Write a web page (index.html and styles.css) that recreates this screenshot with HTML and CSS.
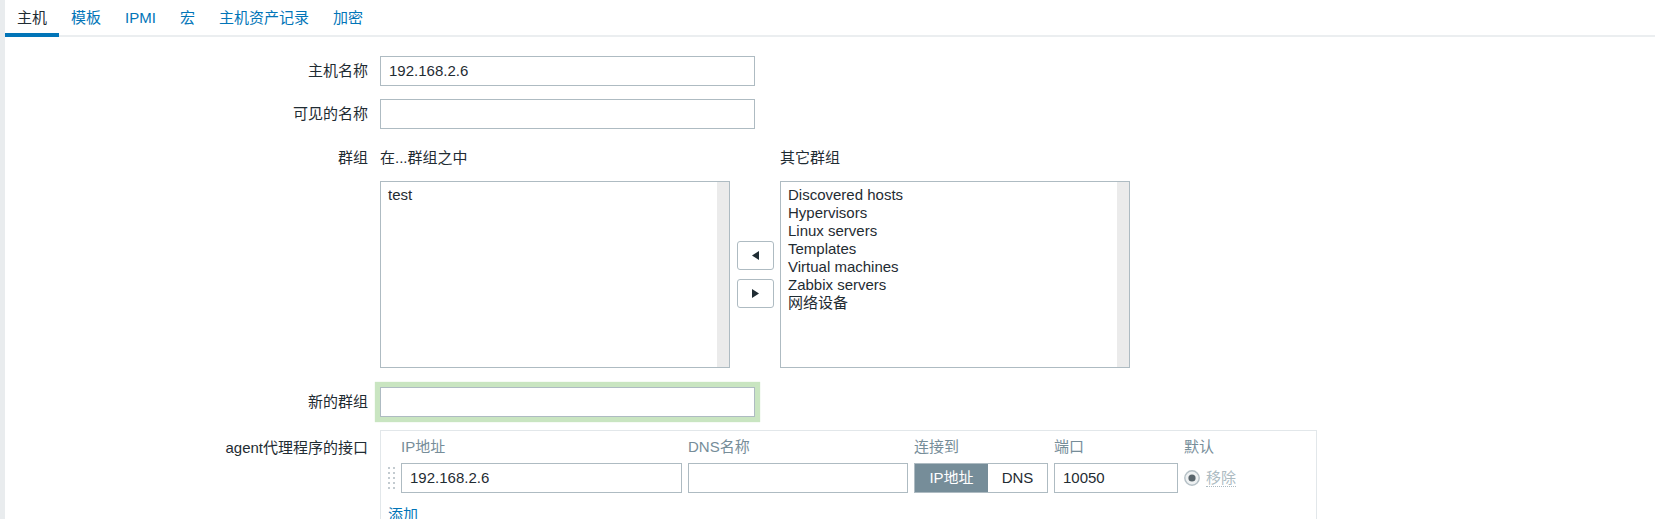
FILE: index.html
```html
<!DOCTYPE html>
<html lang="zh-CN">
<head>
<meta charset="utf-8">
<title>主机</title>
<link rel="stylesheet" href="styles.css">
</head>
<body>
<div class="page">
  <nav class="tabs">
    <a class="tab active">主机</a>
    <a class="tab">模板</a>
    <a class="tab">IPMI</a>
    <a class="tab">宏</a>
    <a class="tab">主机资产记录</a>
    <a class="tab">加密</a>
  </nav>

  <div class="form">
    <div class="row row-host">
      <div class="lbl">主机名称</div>
      <div class="field"><div class="input wide">192.168.2.6</div></div>
    </div>

    <div class="row row-visible">
      <div class="lbl">可见的名称</div>
      <div class="field"><div class="input wide"></div></div>
    </div>

    <div class="row row-groups">
      <div class="lbl lbl-top">群组</div>
      <div class="groups">
        <div class="ghead">在...群组之中</div>
        <div></div>
        <div class="ghead">其它群组</div>
        <div class="listbox">
          <div class="items">
            <div>test</div>
          </div>
          <div class="track"></div>
        </div>
        <div class="movers">
          <button class="mv" type="button"><svg width="7" height="9" viewBox="0 0 7 9"><polygon points="7,0 7,9 0,4.5" fill="#1f2c33"/></svg></button>
          <button class="mv" type="button"><svg width="7" height="9" viewBox="0 0 7 9"><polygon points="0,0 0,9 7,4.5" fill="#1f2c33"/></svg></button>
        </div>
        <div class="listbox">
          <div class="items">
            <div>Discovered hosts</div>
            <div>Hypervisors</div>
            <div>Linux servers</div>
            <div>Templates</div>
            <div>Virtual machines</div>
            <div>Zabbix servers</div>
            <div>网络设备</div>
          </div>
          <div class="track"></div>
        </div>
      </div>
    </div>

    <div class="row row-new">
      <div class="lbl">新的群组</div>
      <div class="field"><div class="input wide glow"></div></div>
    </div>

    <div class="row row-iface">
      <div class="lbl lbl-top lbl-iface">agent代理程序的接口</div>
      <div class="iface">
        <div class="igrid">
          <div></div>
          <div class="ih">IP地址</div>
          <div class="ih">DNS名称</div>
          <div class="ih">连接到</div>
          <div class="ih">端口</div>
          <div class="ih">默认</div>

          <div class="handle">
            <svg width="7" height="22" viewBox="0 0 7 22">
              <g fill="#c3cbd0">
                <rect x="0" y="0" width="2" height="2"/><rect x="5" y="0" width="2" height="2"/>
                <rect x="0" y="5" width="2" height="2"/><rect x="5" y="5" width="2" height="2"/>
                <rect x="0" y="10" width="2" height="2"/><rect x="5" y="10" width="2" height="2"/>
                <rect x="0" y="15" width="2" height="2"/><rect x="5" y="15" width="2" height="2"/>
                <rect x="0" y="20" width="2" height="2"/><rect x="5" y="20" width="2" height="2"/>
              </g>
            </svg>
          </div>
          <div class="input">192.168.2.6</div>
          <div class="input"></div>
          <div class="seg">
            <span class="seg-on">IP地址</span>
            <span class="seg-off">DNS</span>
          </div>
          <div class="input">10050</div>
          <div class="dflt">
            <svg width="16" height="16" viewBox="0 0 16 16">
              <circle cx="8" cy="8" r="7.2" fill="#eef1f2" stroke="#b5c0c6" stroke-width="1.4"/>
              <circle cx="8" cy="8" r="3.6" fill="#59656c"/>
            </svg>
            <span class="remove">移除</span>
          </div>
        </div>
        <a class="add">添加</a>
      </div>
    </div>
  </div>
</div>
</body>
</html>
```

FILE: styles.css
```css
* {
  box-sizing: border-box;
}

html, body {
  margin: 0;
  padding: 0;
  background: #ffffff;
}

body {
  font-family: "Liberation Sans", "Noto Sans CJK SC", sans-serif;
  font-size: 15px;
  color: #1f2c33;
  width: 1655px;
  height: 519px;
  overflow: hidden;
}

.page {
  border-left: 5px solid #e9ecee;
  min-height: 519px;
}

/* tabs */
.tabs {
  display: flex;
  border-bottom: 2px solid #ebeef0;
  height: 37px;
}

.tab {
  display: block;
  padding: 2px 12px 0 12px;
  line-height: 31px;
  height: 37px;
  margin-bottom: -2px;
  border-bottom: 4px solid transparent;
  color: #0275b8;
  text-decoration: none;
  cursor: pointer;
}

.tab.active {
  color: #1f2c33;
  border-bottom-color: #0275b8;
}

/* form rows */
.row {
  display: grid;
  grid-template-columns: 363px 1fr;
  column-gap: 12px;
  align-items: center;
}

.row-host { margin-top: 19px; }
.row-visible { margin-top: 13px; }
.row-groups { margin-top: 20px; align-items: start; }
.row-new { margin-top: 19px; }
.row-iface { margin-top: 13px; align-items: start; }

.lbl {
  text-align: right;
  line-height: 18px;
  white-space: nowrap;
}

.lbl-iface {
  padding-top: 9px;
}

.input {
  height: 30px;
  border: 1px solid #aebbc2;
  background: #ffffff;
  padding: 0 8px;
  line-height: 28px;
  color: #1f2c33;
  white-space: nowrap;
  overflow: hidden;
}

.input.wide {
  width: 375px;
}

.input.glow {
  box-shadow: 0 0 1px 5px #c9e5c1;
}

/* groups */
.groups {
  display: grid;
  grid-template-columns: 350px 50px 350px;
  grid-template-rows: 18px 187px;
  row-gap: 14px;
}

.ghead {
  line-height: 18px;
}

.listbox {
  display: flex;
  border: 1px solid #aebbc2;
  background: #ffffff;
  height: 187px;
}

.items {
  flex: 1;
  padding: 4px 7px;
  line-height: 18px;
}

.track {
  width: 12px;
  background: #ebebeb;
}

.movers {
  display: flex;
  flex-direction: column;
  align-items: center;
  justify-content: center;
  gap: 9px;
}

.mv {
  width: 37px;
  height: 29px;
  border: 1px solid #aebbc2;
  border-radius: 3px;
  background: #ffffff;
  padding: 0;
  display: flex;
  align-items: center;
  justify-content: center;
}

/* interface */
.iface {
  width: 937px;
  border: 1px solid #e2e7ea;
  border-bottom: none;
  padding: 7px 7px 0 7px;
  height: 100px;
}

.igrid {
  display: grid;
  grid-template-columns: 7px 281px 220px 134px 124px auto;
  grid-template-rows: 18px 30px;
  column-gap: 6px;
  row-gap: 7px;
  align-items: center;
}

.ih {
  color: #768d99;
  line-height: 18px;
}

.handle {
  display: flex;
  align-items: center;
  height: 30px;
}

.seg {
  display: flex;
  height: 30px;
  border: 1px solid #aebbc2;
}

.seg-on {
  width: 73px;
  background: #768d99;
  color: #ffffff;
  text-align: center;
  line-height: 28px;
}

.seg-off {
  flex: 1;
  background: #ffffff;
  color: #1f2c33;
  text-align: center;
  line-height: 28px;
}

.dflt {
  display: flex;
  align-items: center;
  gap: 6px;
  height: 30px;
}

.remove {
  color: #acbbc2;
  border-bottom: 1px dotted #acbbc2;
  line-height: 17px;
}

.add {
  display: inline-block;
  margin-top: 13px;
  color: #0275b8;
  line-height: 18px;
  text-decoration: none;
}
```
